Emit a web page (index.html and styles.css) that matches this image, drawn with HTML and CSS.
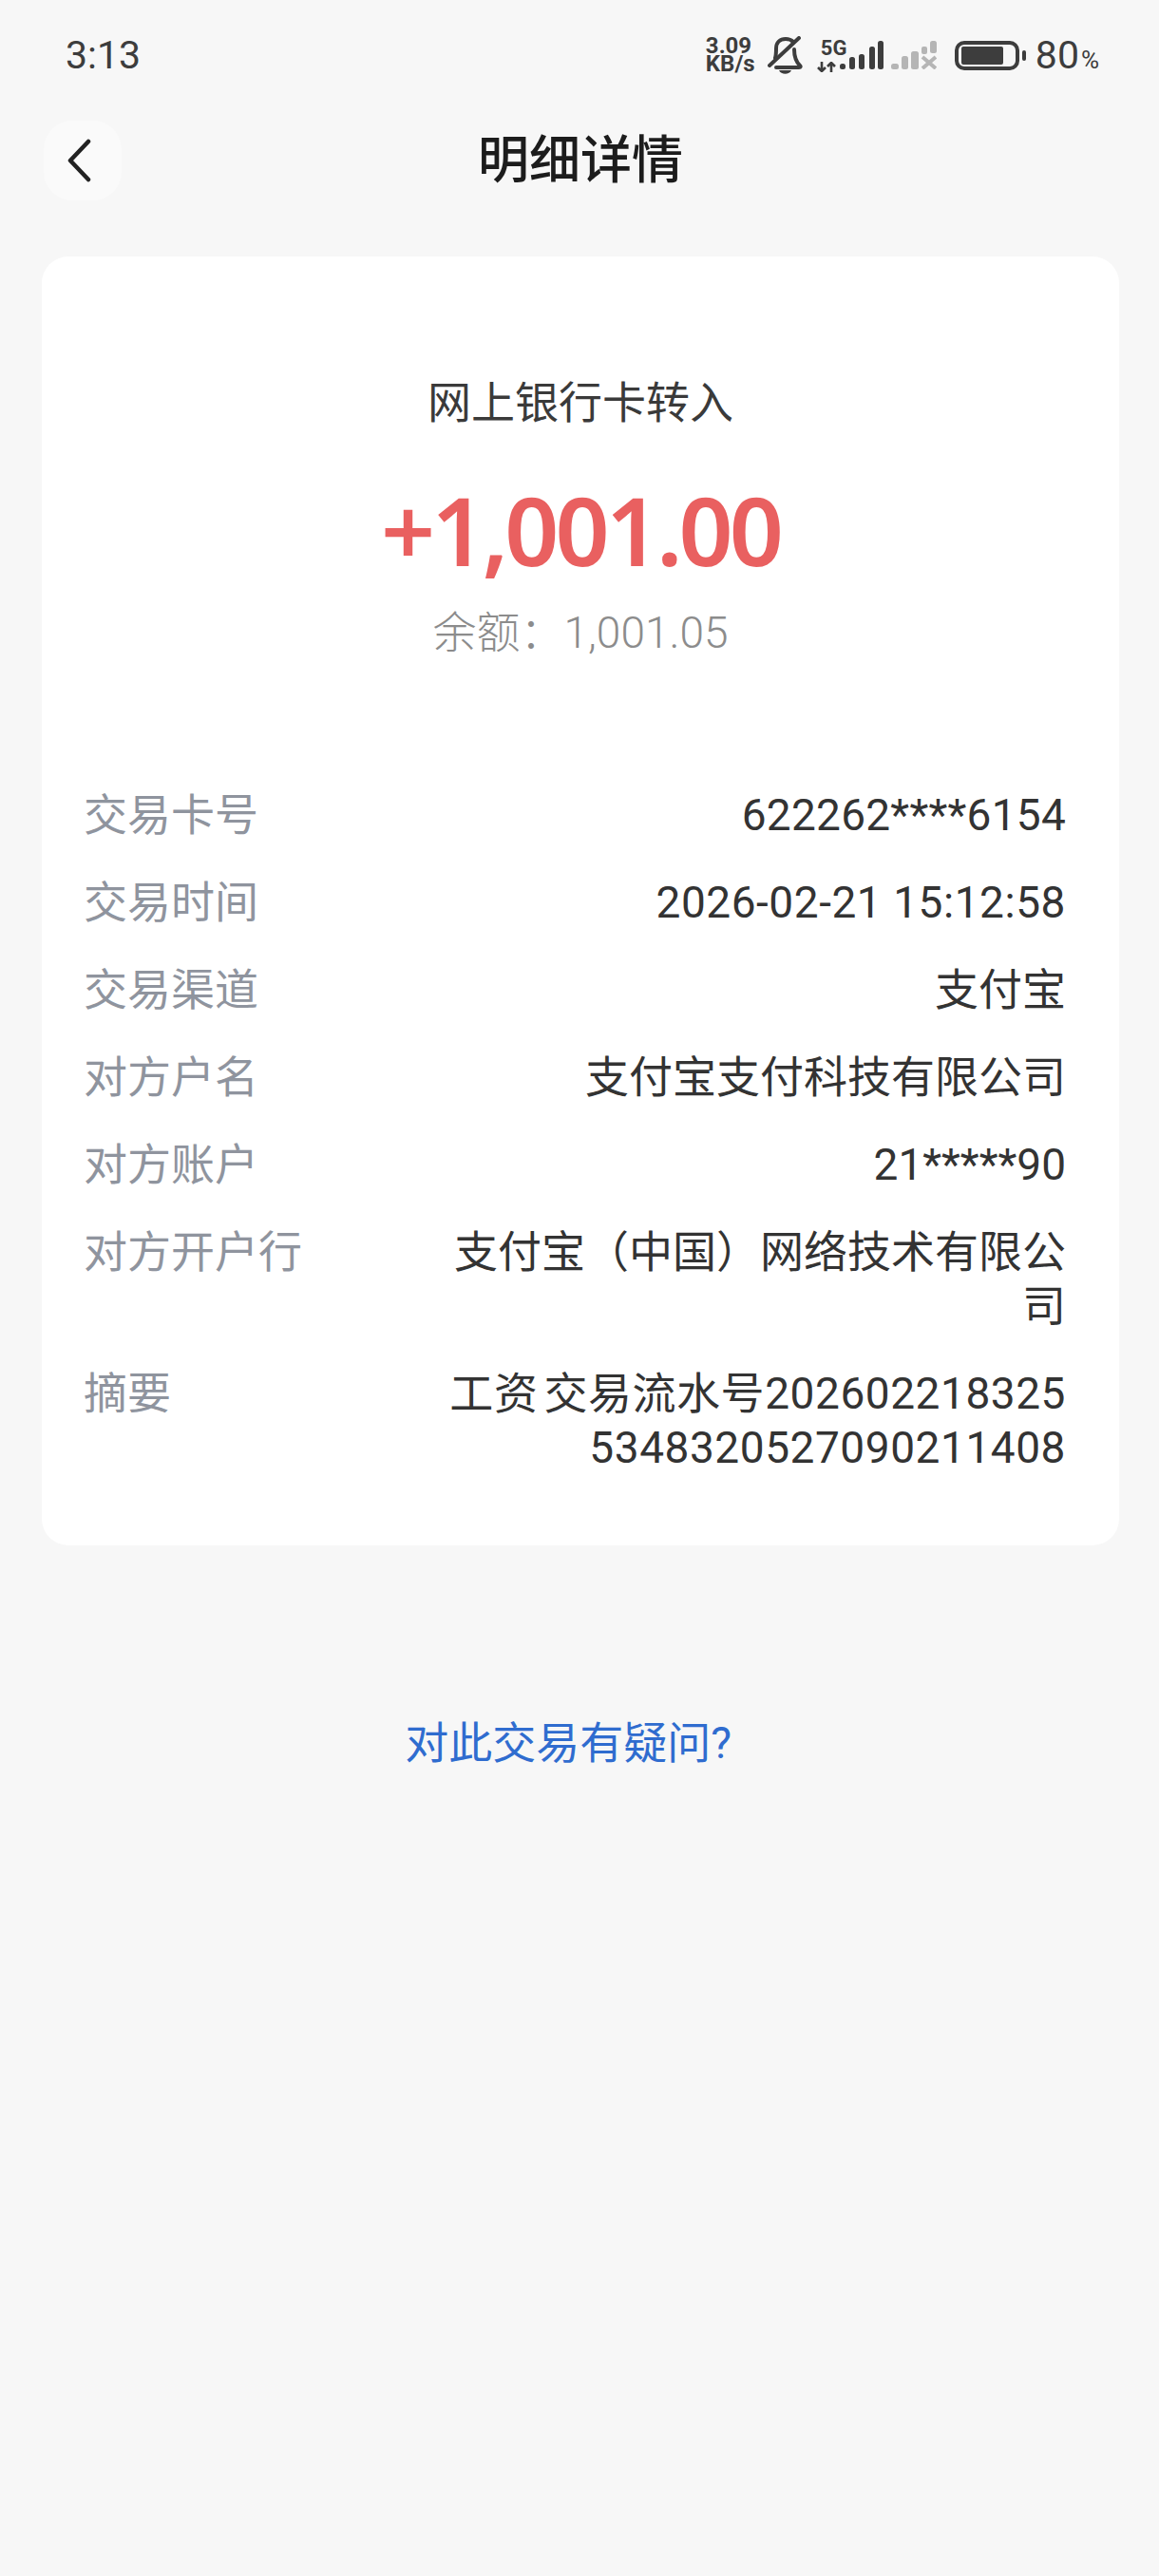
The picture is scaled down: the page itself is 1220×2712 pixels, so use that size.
FILE: index.html
```html
<!DOCTYPE html>
<html lang="zh-CN">

<head>
    <meta charset="utf-8">
    <title>明细详情</title>
    <link rel="stylesheet" href="styles.css">
</head>

<body>
    <div class="status-bar">
        <span class="clock">3:13</span>
        <div class="status-icons">
            <div class="net-speed">
                <span>3.09</span>
                <span>KB/s</span>
            </div>
            <svg class="bell" width="37" height="40" viewBox="0 0 37 40">
                <path d="M8 23c1-3 1-6 1-10 0-6 4-10 10-10 3 0 6 1 8 3M28 14c0 7 1 12 6 17 1 1 1 2-1 2H9" fill="none" stroke="#3d3d3d" stroke-width="4" stroke-linecap="round" stroke-linejoin="round"/>
                <path d="M2 31L33 2" stroke="#3d3d3d" stroke-width="4" stroke-linecap="round"/>
                <path d="M12 36h13c-2 5-11 5-13 0z" fill="#3d3d3d"/>
            </svg>
            <div class="sim">
                <span class="five-g">5G</span>
                <svg class="arrows" width="20" height="11" viewBox="0 0 20 11">
                    <path d="M5 0v10M1 6l4 4 4-4" fill="none" stroke="#3d3d3d" stroke-width="2.6"/>
                    <path d="M15 11V1M11 5l4-4 4 4" fill="none" stroke="#3d3d3d" stroke-width="2.6"/>
                </svg>
            </div>
            <svg class="signal" width="46" height="30" viewBox="0 0 46 30">
                <rect x="0" y="24" width="6" height="6" rx="2.5" fill="#3d3d3d"/>
                <rect x="10" y="17" width="6" height="13" rx="2.5" fill="#3d3d3d"/>
                <rect x="20" y="14" width="6" height="16" rx="2.5" fill="#3d3d3d"/>
                <rect x="31" y="6" width="6" height="24" rx="2.5" fill="#3d3d3d"/>
                <rect x="40" y="0" width="6" height="30" rx="2.5" fill="#3d3d3d"/>
            </svg>
            <svg class="signal-off" width="48" height="30" viewBox="0 0 48 30">
                <rect x="0" y="24" width="8" height="6" rx="2.5" fill="#b5b5b5"/>
                <rect x="11" y="16" width="7" height="14" rx="2.5" fill="#b5b5b5"/>
                <rect x="21" y="11" width="8" height="19" rx="2.5" fill="#b5b5b5"/>
                <rect x="32" y="6" width="6" height="8" rx="2" fill="#b5b5b5"/>
                <rect x="41" y="0" width="7" height="13" rx="2.5" fill="#b5b5b5"/>
                <path d="M33 17l14 12M47 17L33 29" stroke="#b5b5b5" stroke-width="4"/>
            </svg>
            <svg class="battery" width="75" height="31" viewBox="0 0 75 31">
                <rect x="2" y="2" width="64" height="27" rx="8" fill="none" stroke="#3d3d3d" stroke-width="4"/>
                <rect x="7" y="6" width="44" height="19" rx="2" fill="#3d3d3d"/>
                <rect x="71" y="10" width="4" height="11" rx="2" fill="#3d3d3d"/>
            </svg>
            <span class="battery-level">80<small>%</small></span>
        </div>
    </div>

    <div class="top-bar">
        <div class="back-btn">
            <svg width="30" height="46" viewBox="0 0 30 46">
                <path d="M25 3L6 23l19 20" fill="none" stroke="#222" stroke-width="4.5" stroke-linecap="round" stroke-linejoin="round"/>
            </svg>
        </div>
        <h1 class="page-title">明细详情</h1>
        <div></div>
    </div>

    <div class="card">
        <div class="summary">
            <p class="summary-type">网上银行卡转入</p>
            <p class="summary-amount">+1,001.00</p>
            <p class="summary-balance">余额<span class="colon">：</span>1,001.05</p>
        </div>
        <div class="rows">
            <div class="row">
                <span class="row-label">交易卡号</span>
                <span class="row-value row-value-card">622262****6154</span>
            </div>
            <div class="row">
                <span class="row-label">交易时间</span>
                <span class="row-value row-value-num">2026-02-21 15:12:58</span>
            </div>
            <div class="row">
                <span class="row-label">交易渠道</span>
                <span class="row-value">支付宝</span>
            </div>
            <div class="row">
                <span class="row-label">对方户名</span>
                <span class="row-value">支付宝支付科技有限公司</span>
            </div>
            <div class="row">
                <span class="row-label">对方账户</span>
                <span class="row-value">21*****90</span>
            </div>
            <div class="row">
                <span class="row-label">对方开户行</span>
                <span class="row-value">支付宝（中国）网络技术有限公司</span>
            </div>
            <div class="row">
                <span class="row-label">摘要</span>
                <span class="row-value row-value-num row-value-memo">工资 交易流水号2026022183255348320527090211408</span>
            </div>
        </div>
    </div>

    <p class="question">对此交易有疑问?</p>
</body>

</html>
```

FILE: styles.css
```css
* {
    box-sizing: border-box;
}

body,
html {
    margin: 0;
    background: #f7f7f7;
}

body {
    height: 2712px;
    overflow: hidden;
    font-family: Roboto, "Noto Sans CJK SC", sans-serif;
    color: #333;
}

p,
h1 {
    margin: 0;
}

.status-bar {
    display: flex;
    justify-content: space-between;
    align-items: center;
    height: 116px;
    padding: 0 63px 0 69px;
}

.clock {
    font-size: 41px;
    color: #3d3d3d;
}

.status-icons {
    display: flex;
    align-items: center;
    color: #3d3d3d;
}

.net-speed {
    display: flex;
    flex-direction: column;
    width: 65px;
    font-size: 24px;
    font-weight: 700;
    line-height: 19px;
}

.sim {
    display: flex;
    flex-direction: column;
    width: 24px;
    margin-left: 15px;
    white-space: nowrap;
}

.five-g {
    margin-left: 4px;
    font-size: 22px;
    font-weight: 700;
    line-height: 22px;
}

.arrows {
    margin-top: 3px;
}

.signal-off {
    margin-left: 8px;
}

.battery {
    margin-left: 19px;
}

.battery-level {
    margin-left: 10px;
    font-size: 41px;
}

.battery-level small {
    margin-left: 2px;
    font-size: 26px;
}

.top-bar {
    display: grid;
    grid-template-columns: 82px 1fr 82px;
    align-items: center;
    margin: 10px 44px 0 46px;
}

.back-btn {
    display: flex;
    align-items: center;
    height: 84px;
    padding-left: 22px;
    border-radius: 30px;
    background: #fafafa;
}

.page-title {
    padding-top: 2px;
    font-size: 54px;
    font-weight: 500;
    line-height: 84px;
    text-align: center;
    color: #1c1c1c;
}

.card {
    margin: 58px 42px 0 44px;
    border-radius: 28px;
    background: #fff;
}

.summary {
    padding-top: 125px;
    text-align: center;
}

.summary-type {
    font-size: 46px;
    line-height: 58px;
    color: #3a3a3a;
}

.summary-amount {
    margin-top: 38px;
    font-family: "Noto Sans", sans-serif;
    font-size: 100px;
    font-weight: 600;
    letter-spacing: -4px;
    line-height: 132px;
    color: #e96060;
}

.summary-balance {
    margin-top: 10px;
    font-size: 46px;
    font-weight: 300;
    line-height: 58px;
    color: #8c8c8c;
}

.colon {
    font-family: "Noto Sans CJK TC", sans-serif;
}

.rows {
    display: flex;
    flex-direction: column;
    gap: 35px;
    padding: 135px 56px 74px 44px;
}

.row {
    display: flex;
    justify-content: space-between;
    font-size: 46px;
    line-height: 57px;
}

.row-label {
    flex: none;
    color: #8f949e;
}

.row-value {
    width: 660px;
    text-align: right;
    word-break: break-all;
    color: #333;
}

.row-value-num {
    letter-spacing: 0.55px;
}

.row-value-card {
    letter-spacing: 0.25px;
}

.row-value-memo {
    word-spacing: -6px;
}

.question {
    margin-top: 179px;
    padding-right: 24px;
    font-size: 46px;
    line-height: 58px;
    text-align: center;
    color: #2f6ccf;
}
```
